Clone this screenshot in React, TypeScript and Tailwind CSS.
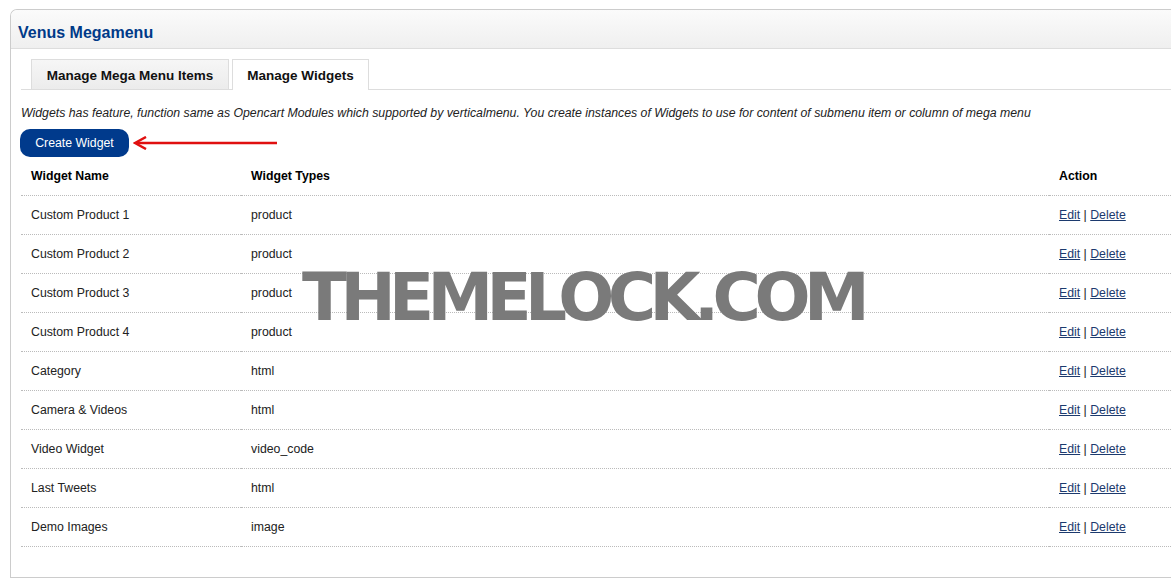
import React from "react";

const rows = [
  { name: "Custom Product 1", type: "product" },
  { name: "Custom Product 2", type: "product" },
  { name: "Custom Product 3", type: "product" },
  { name: "Custom Product 4", type: "product" },
  { name: "Category", type: "html" },
  { name: "Camera & Videos", type: "html" },
  { name: "Video Widget", type: "video_code" },
  { name: "Last Tweets", type: "html" },
  { name: "Demo Images", type: "image" },
];

const App: React.FC = () => {
  return (
    <div className="relative w-[1171px] h-[587px] overflow-hidden bg-white font-['Liberation_Sans',Arial,sans-serif] text-[12.3px] text-[#222]">
      {/* Panel */}
      <div className="ml-[10px] mt-[9px] w-[1200px] border border-r-0 border-[#ccc] rounded-tl-[7px] overflow-hidden">
        {/* Header */}
        <div className="h-[39px] flex items-center pl-[7px] border-b border-[#ddd] bg-gradient-to-b from-[#fbfbfb] to-[#efefef]">
          <h1 className="text-[16px] font-bold text-[#003a88] mt-[7px]">Venus Megamenu</h1>
        </div>

        <div className="pl-[10px] pb-[30px]">
          {/* Tabs */}
          <div className="mt-[10px] flex items-end gap-[3px] pl-[10px] border-b border-[#ddd] h-[31px]">
            <div className="w-[198px] h-[30px] pt-[3px] flex items-center justify-center border border-b-0 border-[#ddd] bg-gradient-to-b from-[#f6f6f6] to-[#ececec] text-[13.5px] font-bold text-[#111]">
              Manage Mega Menu Items
            </div>
            <div className="w-[137px] h-[31px] pt-[2px] -mb-px flex items-center justify-center border border-b-0 border-[#ddd] bg-white text-[13.5px] font-bold text-[#111]">
              Manage Widgets
            </div>
          </div>

          {/* Description */}
          <p className="mt-[16px] italic text-[#222] leading-[15px]">
            Widgets has feature, function same as Opencart Modules which supported by verticalmenu. You create instances of Widgets to use for content of submenu item or column of mega menu
          </p>

          {/* Button + arrow */}
          <div className="mt-[8px] -ml-[1px] flex items-center">
            <button className="w-[109px] h-[28px] rounded-[10px] bg-[#003a8c] text-white text-[12.3px]">
              Create Widget
            </button>
            <svg width="146" height="14" viewBox="0 0 146 14" className="ml-[4px]">
              <line x1="4" y1="7" x2="144" y2="7" stroke="#e01010" strokeWidth="2.5" />
              <path d="M13 1 L2 7 L13 13" fill="none" stroke="#e01010" strokeWidth="2.5" strokeLinejoin="miter" />
            </svg>
          </div>

          {/* Table */}
          <table className="w-[1180px] border-collapse">
            <thead>
              <tr className="h-[38px] border-b border-dotted border-[#bbb]">
                <th className="w-[220px] pl-[10px] text-left font-bold text-black">Widget Name</th>
                <th className="w-[808px] pl-[10px] text-left font-bold text-black">Widget Types</th>
                <th className="pl-[10px] text-left font-bold text-black">Action</th>
              </tr>
            </thead>
            <tbody>
              {rows.map((r) => (
                <tr key={r.name} className="h-[39px] border-b border-dotted border-[#bbb]">
                  <td className="pl-[10px] pt-[2px]">{r.name}</td>
                  <td className="pl-[10px] pt-[2px]">{r.type}</td>
                  <td className="pl-[10px] pt-[2px]">
                    <a href="#" className="underline text-[#1c3a6e]">Edit</a>
                    <span className="text-[#222]"> | </span>
                    <a href="#" className="underline text-[#1c3a6e]">Delete</a>
                  </td>
                </tr>
              ))}
            </tbody>
          </table>
        </div>
      </div>

      {/* Watermark */}
      <div className="absolute left-[302px] top-[265px] text-[66px] leading-none font-bold tracking-[-6.6px] text-[#7a7a7a] font-['DejaVu_Sans',sans-serif] pointer-events-none">
        THEMELOCK.COM
      </div>
    </div>
  );
};

export default App;
